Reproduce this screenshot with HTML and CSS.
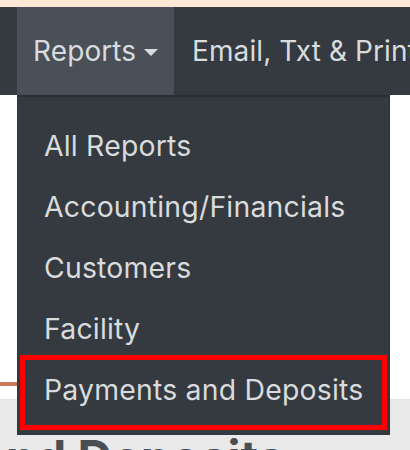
FILE: index.html
```html
<!DOCTYPE html>
<html lang="en">
<head>
<meta charset="utf-8">
<title>Reports menu</title>
<link rel="stylesheet" href="styles.css">
</head>
<body>
  <div class="notice-strip"></div>
  <nav class="navbar">
    <div class="nav-lead"></div>
    <div class="nav-item dropdown is-open">
      <span class="nav-link">Reports</span><span class="caret"></span>
      <div class="dropdown-menu">
        <a class="dropdown-item">All Reports</a>
        <a class="dropdown-item">Accounting/Financials</a>
        <a class="dropdown-item">Customers</a>
        <a class="dropdown-item">Facility</a>
        <a class="dropdown-item">Payments and Deposits</a>
        <div class="highlight-box"></div>
      </div>
    </div>
    <div class="nav-item"><span class="nav-link">Email, Txt &amp; Print</span></div>
  </nav>
  <div class="subnav">
    <div class="tab-underline"></div>
  </div>
  <main class="page">
    <h1 class="page-title">Payments and Deposits</h1>
  </main>
</body>
</html>
```
FILE: styles.css
```css
* { box-sizing: border-box; }
html, body {
  margin: 0;
  padding: 0;
  width: 410px;
  height: 450px;
  overflow: hidden;
  background: #ffffff;
  font-family: Inter, "Noto Sans", "Liberation Sans", sans-serif;
}
.notice-strip {
  height: 7px;
  background: #fde8d8;
}
.navbar {
  height: 88px;
  background: #343a40;
  display: flex;
  align-items: stretch;
  white-space: nowrap;
  position: relative;
  z-index: 2;
}
.nav-lead {
  width: 17px;
  flex: none;
}
.nav-item {
  display: flex;
  align-items: center;
  color: #d9dbdd;
  font-size: 28px;
  letter-spacing: 0.1px;
  padding-left: 18px;
  flex: none;
}
.dropdown {
  position: relative;
  width: 157px;
  padding-left: 16px;
  background: #4a5058;
}
.caret {
  display: inline-block;
  margin-left: 8px;
  margin-top: 2px;
  width: 0;
  height: 0;
  border-left: 7px solid transparent;
  border-right: 7px solid transparent;
  border-top: 7px solid #d9dbdd;
}
.dropdown-menu {
  position: absolute;
  left: 0;
  top: 88px;
  width: 373px;
  height: 340px;
  background: #343a40;
  border-top: 2px solid #2a2f34;
  border-right: 1px solid #2c3136;
  padding-top: 18px;
  display: flex;
  flex-direction: column;
  letter-spacing: 0.2px;
}
.dropdown-item {
  display: block;
  height: 61px;
  line-height: 61px;
  padding-left: 27px;
  color: #d9dbdd;
  font-size: 28.4px;
}
.highlight-box {
  position: absolute;
  left: 3px;
  top: 258px;
  width: 367px;
  height: 75px;
  border: 5px solid #ff0000;
}
.subnav {
  height: 305px;
  padding-top: 287px;
  background: #ffffff;
  border-bottom: 1px solid #e2e2e2;
}
.tab-underline {
  width: 120px;
  height: 4px;
  background: #c97c5b;
}
.page {
  background: #e9e9e9;
  height: 60px;
  padding-top: 34px;
  overflow: hidden;
}
.page-title {
  margin: 0;
  font-size: 48px;
  font-weight: 700;
  color: #474e56;
  white-space: nowrap;
  text-indent: -266px;
  line-height: 48px;
}
```
